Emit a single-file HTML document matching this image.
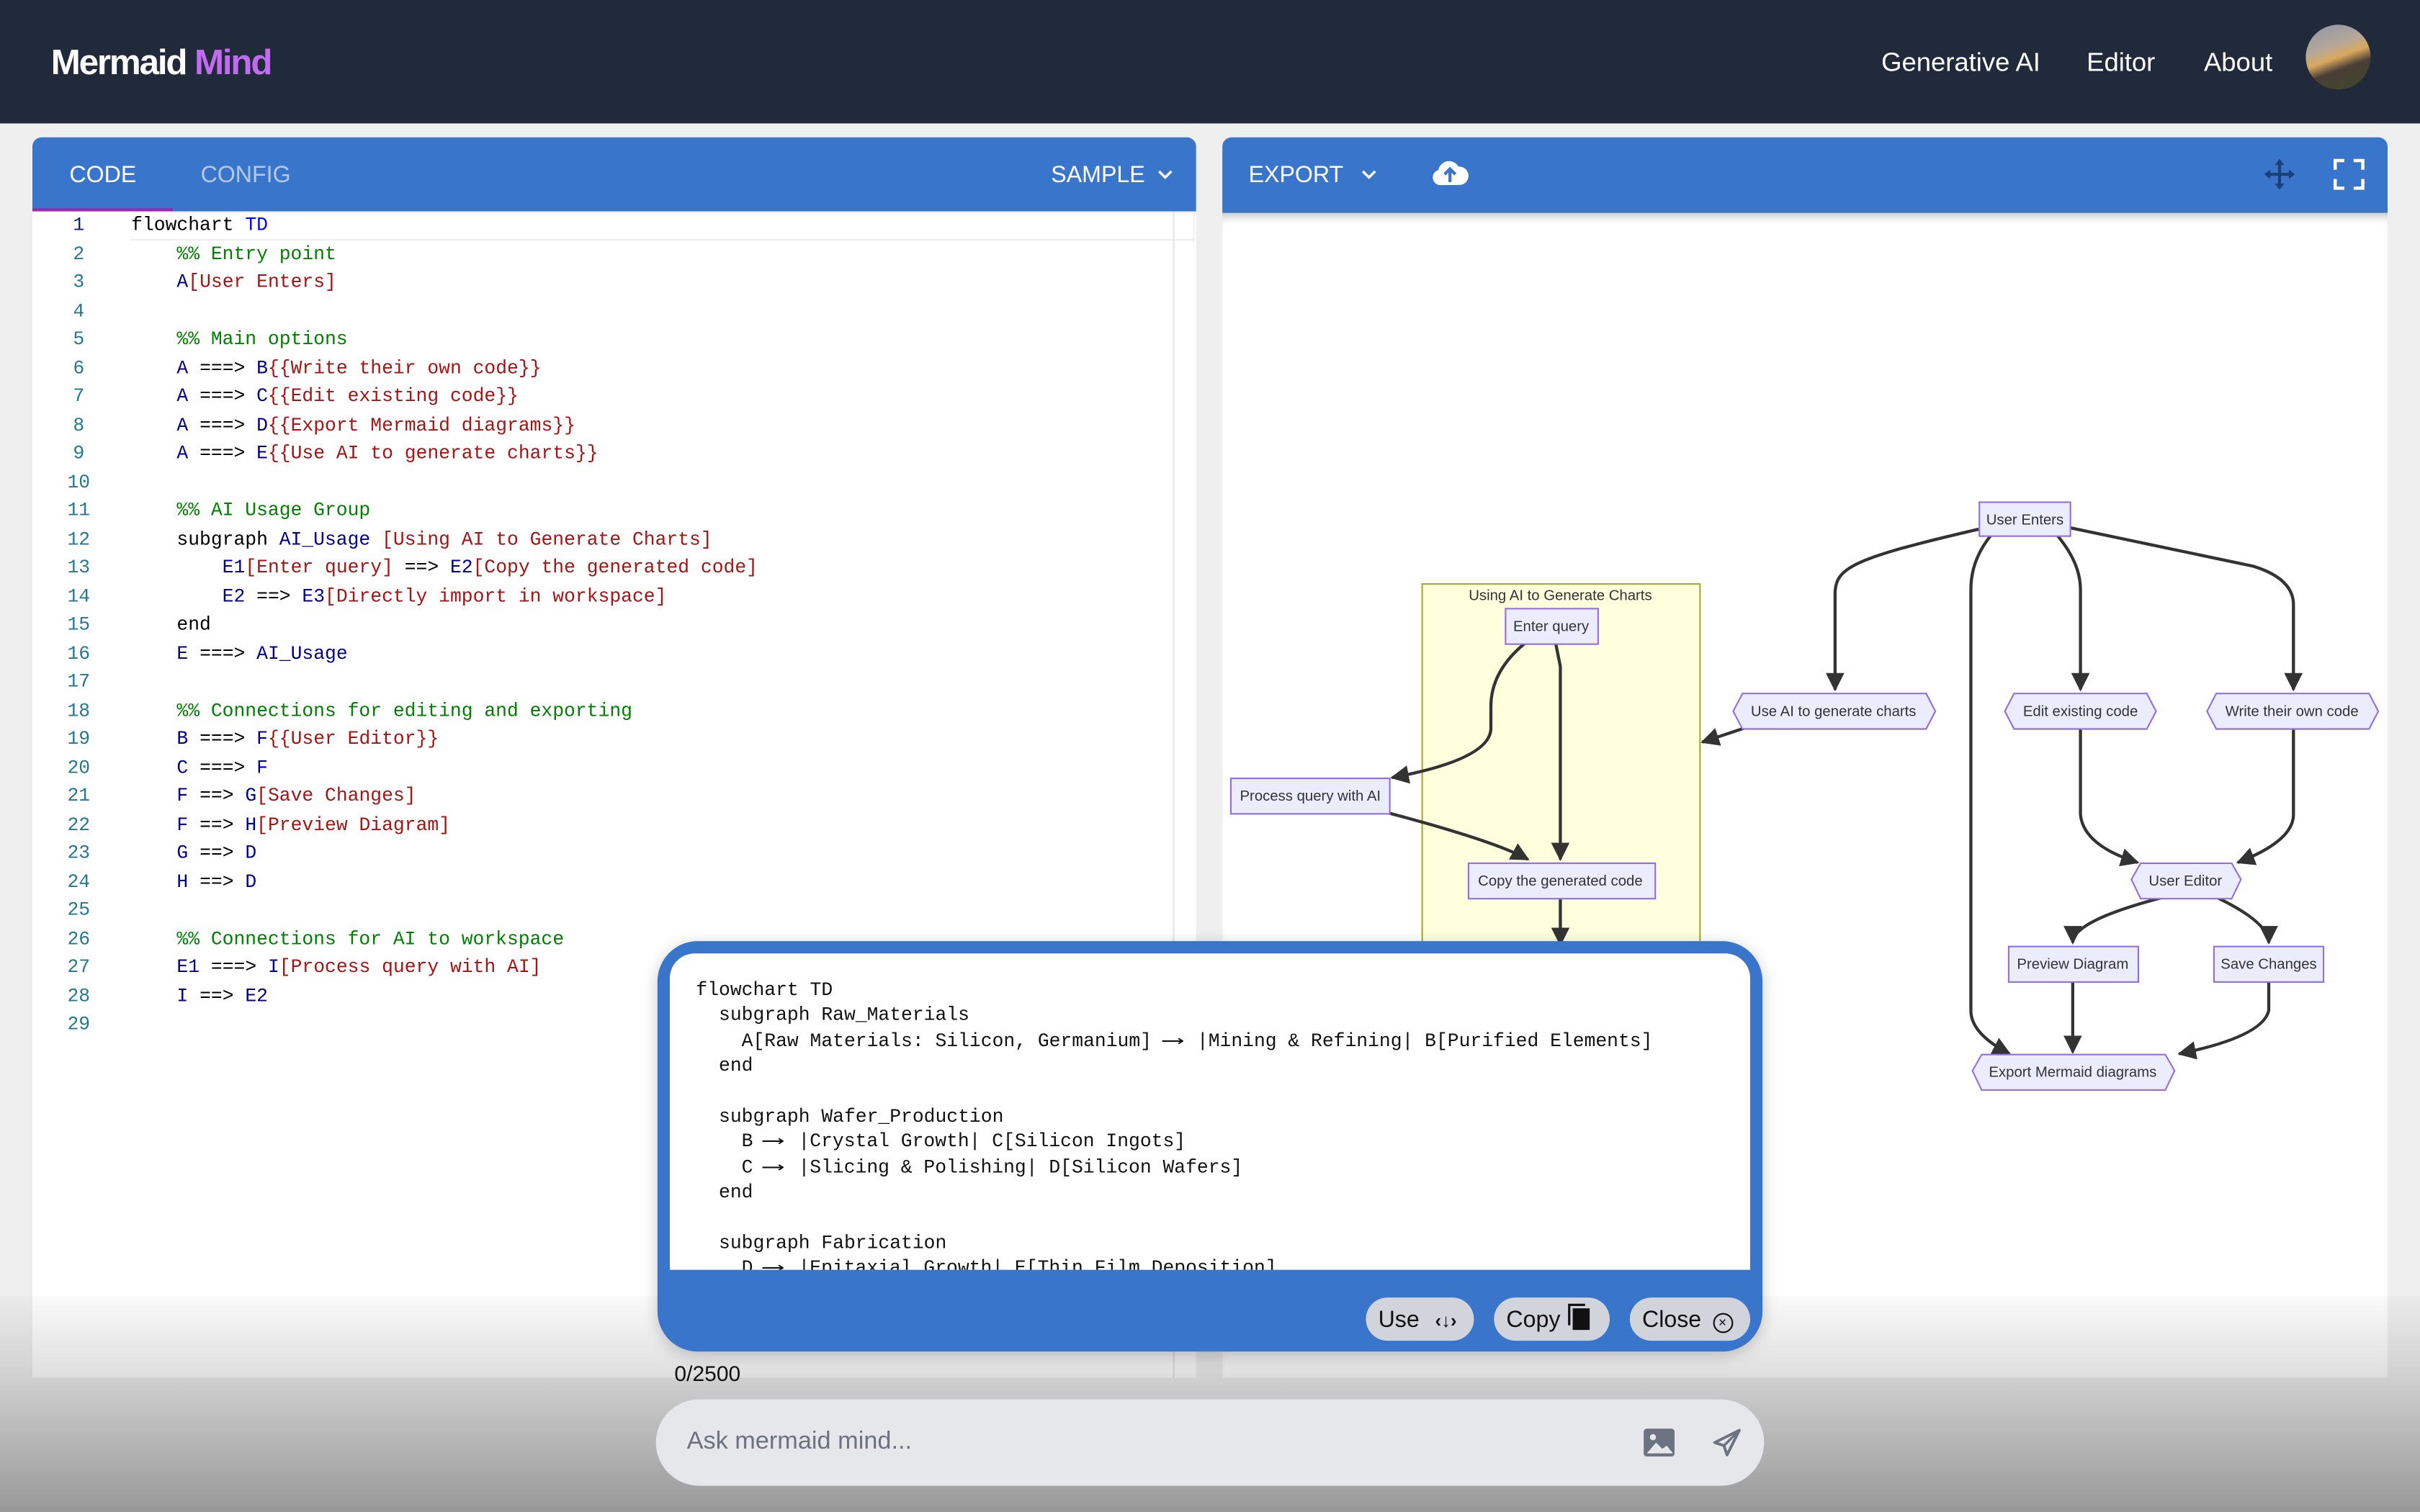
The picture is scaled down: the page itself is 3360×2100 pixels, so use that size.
<!DOCTYPE html>
<html><head><meta charset="utf-8">
<style>
*{margin:0;padding:0;box-sizing:border-box}
html,body{width:3360px;height:2100px;overflow:hidden;background:#efefef}
#w{position:absolute;left:0;top:0;width:1568px;height:980px;transform:scale(2.142857);transform-origin:0 0;font-family:"Liberation Sans",sans-serif;background:#efefef}
.abs{position:absolute}
.nav{left:0;top:0;width:1568px;height:80px;background:#212a3b}
.logo{left:33px;top:27px;font-size:23px;font-weight:bold;color:#fff;letter-spacing:-1px}
.logo span{color:#c06bf0}
.nl{top:31px;font-size:17px;color:#fff}
.hdr{height:49px;background:#3a75cc;border-radius:6px 6px 0 0;top:89px;color:#fff;font-size:15px}
.mono{font-family:"Liberation Mono","DejaVu Sans Mono",monospace}
.code{left:21px;top:137px;width:754px;height:756px;background:#fff}
.ln{position:absolute;left:0;width:60px;text-align:center;color:#237893;font-size:12.3px}
.cl{position:absolute;left:85px;font-size:12.3px;white-space:pre;color:#000}
.c{color:#008000}.k{color:#0000ff}.v{color:#001080}.s{color:#a31515}.b{color:#00008b}
.btn{top:841px;height:28px;background:#d1d5db;border-radius:14px;font-size:15px;color:#111;padding:6px 0 0 8px}
.ar{display:inline-block;width:22px;transform:scaleX(1.6);transform-origin:0 50%}
</style></head><body><div id="w">
<div class="abs nav"></div>
<div class="abs logo">Mermaid <span>Mind</span></div>
<div class="abs nl" style="left:1219px">Generative AI</div>
<div class="abs nl" style="left:1352px">Editor</div>
<div class="abs nl" style="left:1428px">About</div>
<div class="abs" style="left:1494px;top:16px;width:42px;height:42px;border-radius:50%;background:linear-gradient(160deg,#8c94a8 0%,#b6a89a 35%,#d9a85e 50%,#4a3e36 65%,#3c4a2a 100%)"></div>

<div class="abs hdr" style="left:21px;width:754px">
 <div class="abs" style="left:24px;top:16px">CODE</div>
 <div class="abs" style="left:109px;top:16px;color:#b4c8ea">CONFIG</div>
 <div class="abs" style="left:660px;top:16px">SAMPLE</div>
 <svg class="abs" style="left:728px;top:19px" width="12" height="10"><path d="M2 3l4 4 4-4" stroke="#fff" stroke-width="1.6" fill="none"/></svg>
 <div class="abs" style="left:0;top:46px;width:91px;height:3px;background:#9c27b0"></div>
</div>
<div class="abs code mono">
 <div class="abs" style="left:63px;top:0;width:690px;height:19px;border:1px solid #eee;border-left:none"></div>
 <div class="abs" style="left:739px;top:0;width:15px;height:756px;border-left:1px solid #e5e5e5"></div>
</div>
<div id="codelines" class="abs mono" style="left:21px;top:137px;width:754px;height:560px"></div>

<div class="abs hdr" style="left:792px;width:755px">
 <div class="abs" style="left:17px;top:16px">EXPORT</div>
 <svg class="abs" style="left:89px;top:19px" width="12" height="10"><path d="M2 3l4 4 4-4" stroke="#fff" stroke-width="1.6" fill="none"/></svg>
 <svg class="abs" style="left:135px;top:12px" width="25" height="22" viewBox="0 0 25 22"><path d="M6 19a5 5 0 0 1-1-9.8A7 7 0 0 1 18 7a5.5 5.5 0 0 1 1 11.9z" fill="#fff"/><path d="M12.5 17V9M9 12l3.5-3.5L16 12" stroke="#3a75cc" stroke-width="2" fill="none"/></svg>
 <svg class="abs" style="left:674px;top:13px" width="22" height="22" viewBox="0 0 22 22"><path d="M11 1l3 4h-2v5h5V8l4 3-4 3v-2h-5v5h2l-3 4-3-4h2v-5H5v2l-4-3 4-3v2h5V5H8z" fill="#1d3f78"/></svg>
 <svg class="abs" style="left:720px;top:14px" width="20" height="20" viewBox="0 0 20 20"><path d="M1 7V1h6M13 1h6v6M19 13v6h-6M7 19H1v-6" stroke="#fff" stroke-width="2.2" fill="none"/></svg>
</div>
<div class="abs" style="left:792px;top:138px;width:755px;height:755px;background:#fff;box-shadow:inset 0 6px 6px -4px rgba(0,0,0,.25)"></div>

<svg class="abs" style="left:0;top:0" width="1568" height="980" font-family="Liberation Sans,sans-serif" font-size="9.5">
<defs><marker id="a" viewBox="0 0 10 10" refX="9" refY="5" markerWidth="6" markerHeight="6" orient="auto"><path d="M0 0L10 5L0 10z" fill="#333"/></marker></defs>
<rect x="921.5" y="378.5" width="180" height="240" fill="#ffffde" stroke="#aaaa33" stroke-width="1"/>
<text x="1011" y="389" text-anchor="middle" fill="#333">Using AI to Generate Charts</text>
<g stroke="#333" stroke-width="2" fill="none" marker-end="url(#a)">
<path d="M1282 343C1200 362 1189 368 1189 385L1189 447"/>
<path d="M1333 347Q1348 365 1348 382L1348 447"/>
<path d="M1341 342L1460 367Q1486 375 1486 392L1486 447"/>
<path d="M1290 347Q1277 363 1277 382L1277 655Q1277 670 1302 683"/>
<path d="M1130 472L1103 481"/>
<path d="M988 417Q966 435 966 458L966 472Q966 492 902 504"/>
<path d="M1008 417L1011 432L1011 557"/>
<path d="M900 527Q968 545 990 557"/>
<path d="M1011 582L1011 612"/>
<path d="M1348 472L1348 528Q1350 548 1385 559"/>
<path d="M1486 472L1486 528Q1486 545 1450 559"/>
<path d="M1400 582Q1343 597 1343 611"/>
<path d="M1437 582Q1470 598 1470 611"/>
<path d="M1343 636L1343 682"/>
<path d="M1470 636L1470 655Q1466 672 1412 683"/>
</g>
<g fill="#ececff" stroke="#9370db" stroke-width="1">
<rect x="1282.5" y="325.5" width="59" height="22"/>
<rect x="975.5" y="394.5" width="60" height="23"/>
<rect x="797.5" y="504.5" width="103" height="23"/>
<rect x="951.5" y="559.5" width="121" height="23"/>
<rect x="1301.5" y="613.5" width="84" height="23"/>
<rect x="1434.5" y="613.5" width="71" height="23"/>
<polygon points="1123,461 1129,449.5 1248,449.5 1254,461 1248,472.5 1129,472.5"/>
<polygon points="1299,461 1305,449.5 1391,449.5 1397,461 1391,472.5 1305,472.5"/>
<polygon points="1430,461 1436,449.5 1535,449.5 1541,461 1535,472.5 1436,472.5"/>
<polygon points="1381,570 1387,559.5 1446,559.5 1452,570 1446,582.5 1387,582.5"/>
<polygon points="1278,694 1284,683.5 1403,683.5 1409,694 1403,706.5 1284,706.5"/>
</g>
<g fill="#333" text-anchor="middle">
<text x="1312" y="340">User Enters</text>
<text x="1005" y="409">Enter query</text>
<text x="849" y="519">Process query with AI</text>
<text x="1011" y="574">Copy the generated code</text>
<text x="1343" y="628">Preview Diagram</text>
<text x="1470" y="628">Save Changes</text>
<text x="1188" y="464">Use AI to generate charts</text>
<text x="1348" y="464">Edit existing code</text>
<text x="1485" y="464">Write their own code</text>
<text x="1416" y="574">User Editor</text>
<text x="1343" y="698">Export Mermaid diagrams</text>
</g>
</svg>

<div class="abs" style="left:0;top:840px;width:1568px;height:140px;background:linear-gradient(rgba(0,0,0,0.02),rgba(0,0,0,0.12) 35%,rgba(0,0,0,0.36))"></div>

<div class="abs" style="left:426px;top:610px;width:716px;height:266px;background:#3a75cc;border-radius:26px;box-shadow:0 2px 10px rgba(0,0,0,.2)"></div>
<div class="abs mono" style="left:434px;top:618px;width:700px;height:205px;background:#fff;border-radius:16px 16px 0 0;overflow:hidden;font-size:12.3px;line-height:16.4px;white-space:pre;color:#111;padding:16px 0 0 17px">flowchart TD
  subgraph Raw_Materials
    A[Raw Materials: Silicon, Germanium] <span class="ar">⟶</span>|Mining &amp; Refining| B[Purified Elements]
  end

  subgraph Wafer_Production
    B <span class="ar">⟶</span>|Crystal Growth| C[Silicon Ingots]
    C <span class="ar">⟶</span>|Slicing &amp; Polishing| D[Silicon Wafers]
  end

  subgraph Fabrication
    D <span class="ar">⟶</span>|Epitaxial Growth| E[Thin Film Deposition]</div>
<div class="abs btn" style="left:885px;width:70px">Use <span style="font-size:12px;font-weight:bold;margin-left:6px">‹↓›</span></div>
<div class="abs btn" style="left:968px;width:75px">Copy <span style="display:inline-block;width:11px;height:14px;background:#111;vertical-align:-2px;margin-left:4px;box-shadow:-2px -2px 0 -0.5px #d1d5db,-3px -3px 0 0 #111"></span></div>
<div class="abs btn" style="left:1056px;width:78px">Close <span style="display:inline-block;width:13px;height:13px;border:1.5px solid #111;border-radius:50%;font-size:9px;line-height:10px;text-align:center;vertical-align:0;margin-left:3px">×</span></div>

<div class="abs" style="left:437px;top:882px;font-size:14px;color:#111">0/2500</div>
<div class="abs" style="left:425px;top:907px;width:718px;height:56px;background:#e5e7eb;border-radius:28px"></div>
<div class="abs" style="left:445px;top:926px;font-size:16px;color:#6b7280">Ask mermaid mind...</div>
<svg class="abs" style="left:1064px;top:924px" width="22" height="22" viewBox="0 0 22 22"><rect x="1" y="2" width="20" height="18" rx="2" fill="#6b7280"/><circle cx="7" cy="7.5" r="2" fill="#e5e7eb"/><path d="M3 18l6-7 4 4 3-2 4 5z" fill="#e5e7eb"/></svg>
<svg class="abs" style="left:1109px;top:925px" width="20" height="20" viewBox="0 0 20 20"><path d="M18 2L2 10l6 2 2 6z" fill="none" stroke="#6b7280" stroke-width="1.8" stroke-linejoin="round"/><path d="M18 2L8 12" stroke="#6b7280" stroke-width="1.6"/></svg>

<script>
var L=[
'<span>flowchart</span> <span class="k">TD</span>',
'    <span class="c">%% Entry point</span>',
'    <span class="b">A</span><span class="s">[User Enters]</span>',
'',
'    <span class="c">%% Main options</span>',
'    <span class="b">A</span> ===> <span class="b">B</span><span class="s">{{Write their own code}}</span>',
'    <span class="b">A</span> ===> <span class="b">C</span><span class="s">{{Edit existing code}}</span>',
'    <span class="b">A</span> ===> <span class="b">D</span><span class="s">{{Export Mermaid diagrams}}</span>',
'    <span class="b">A</span> ===> <span class="b">E</span><span class="s">{{Use AI to generate charts}}</span>',
'',
'    <span class="c">%% AI Usage Group</span>',
'    subgraph <span class="b">AI_Usage</span> <span class="s">[Using AI to Generate Charts]</span>',
'        <span class="b">E1</span><span class="s">[Enter query]</span> ==> <span class="b">E2</span><span class="s">[Copy the generated code]</span>',
'        <span class="b">E2</span> ==> <span class="b">E3</span><span class="s">[Directly import in workspace]</span>',
'    end',
'    <span class="b">E</span> ===> <span class="b">AI_Usage</span>',
'',
'    <span class="c">%% Connections for editing and exporting</span>',
'    <span class="b">B</span> ===> <span class="b">F</span><span class="s">{{User Editor}}</span>',
'    <span class="b">C</span> ===> <span class="b">F</span>',
'    <span class="b">F</span> ==> <span class="b">G</span><span class="s">[Save Changes]</span>',
'    <span class="b">F</span> ==> <span class="b">H</span><span class="s">[Preview Diagram]</span>',
'    <span class="b">G</span> ==> <span class="b">D</span>',
'    <span class="b">H</span> ==> <span class="b">D</span>',
'',
'    <span class="c">%% Connections for AI to workspace</span>',
'    <span class="b">E1</span> ===> <span class="b">I</span><span class="s">[Process query with AI]</span>',
'    <span class="b">I</span> ==> <span class="b">E2</span>',
''];
var h='';for(var i=0;i<L.length;i++){var t=2+i*18.5;h+='<div class="ln" style="top:'+t+'px;color:'+(i==0?'#0b216f':'#237893')+'">'+(i+1)+'</div><div class="cl" style="left:64px;top:'+t+'px">'+L[i]+'</div>';}
document.getElementById('codelines').innerHTML=h;
</script>
</div></body></html>
